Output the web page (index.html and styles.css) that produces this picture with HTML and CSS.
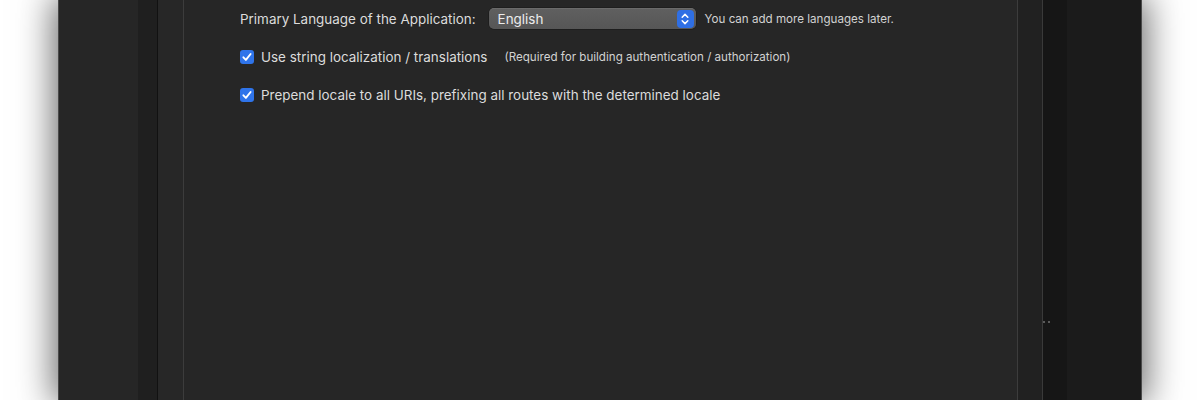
FILE: index.html
```html
<!DOCTYPE html>
<html>
<head>
<meta charset="utf-8">
<link rel="stylesheet" href="styles.css">
</head>
<body>
<div class="window">
  <div class="col col-a"></div>
  <div class="col col-b"></div>
  <div class="col col-c"></div>
  <div class="content">
    <div class="row">
      <span class="label">Primary Language of the Application:</span>
      <div class="select">
        <span class="select-text">English</span>
        <span class="stepper">
          <svg width="10" height="14" viewBox="0 0 10 14"><path d="M2.2 5.2 L5 2.4 L7.8 5.2" fill="none" stroke="#fff" stroke-width="1.5" stroke-linecap="round" stroke-linejoin="round"/><path d="M2.2 8.8 L5 11.6 L7.8 8.8" fill="none" stroke="#fff" stroke-width="1.5" stroke-linecap="round" stroke-linejoin="round"/></svg>
        </span>
      </div>
      <span class="hint">You can add more languages later.</span>
    </div>
    <div class="row">
      <span class="check"><svg width="14" height="14" viewBox="0 0 14 14"><path d="M3.4 7.3 L5.9 9.9 L10.6 4" fill="none" stroke="#fff" stroke-width="1.9" stroke-linecap="round" stroke-linejoin="round"/></svg></span>
      <span class="label">Use string localization / translations</span>
      <span class="hint hint-gap">(Required for building authentication / authorization)</span>
    </div>
    <div class="row">
      <span class="check"><svg width="14" height="14" viewBox="0 0 14 14"><path d="M3.4 7.3 L5.9 9.9 L10.6 4" fill="none" stroke="#fff" stroke-width="1.9" stroke-linecap="round" stroke-linejoin="round"/></svg></span>
      <span class="label">Prepend locale to all URIs, prefixing all routes with the determined locale</span>
    </div>
  </div>
  <div class="col col-d"><span class="dots"><i></i><i></i></span></div>
  <div class="col col-e"></div>
  <div class="col col-f"></div>
</div>
</body>
</html>
```
FILE: styles.css
```css
html, body {
  margin: 0;
  padding: 0;
  height: 100%;
  background: #ffffff;
  overflow: hidden;
}
body {
  font-family: Inter, "Liberation Sans", sans-serif;
}
.window {
  margin-left: 58px;
  width: 1084px;
  height: 400px;
  box-sizing: border-box;
  border-left: 1px solid #4a4a4a;
  border-right: 1px solid #4a4a4a;
  display: flex;
  box-shadow: 0 0 34px 4px rgba(0, 0, 0, 0.6);
  background: #262626;
}
.col { height: 100%; box-sizing: border-box; }
.col-a { width: 79px; background: #262626; }
.col-b { width: 20px; background: #1f1f1f; border-right: 1px solid #111111; }
.col-c { width: 26px; background: #272727; border-right: 1px solid #3c3c3c; }
.content {
  width: 834px;
  box-sizing: border-box;
  background: #262626;
  border-right: 1px solid #3c3c3c;
  padding: 8px 0 0 56px;
  display: flex;
  flex-direction: column;
  gap: 17px;
}
.col-d { width: 25px; background: #212121; border-right: 1px solid #3a3a3a; position: relative; }
.col-e { width: 24px; background: #161616; }
.col-f { flex: 1; background: #1b1b1b; }
.dots {
  position: absolute;
  left: 25px;
  top: 321px;
  display: flex;
  gap: 3px;
}
.dots i { width: 2px; height: 2px; background: #5a5a5a; display: block; }
.row {
  display: flex;
  align-items: center;
  height: 21px;
}
.label {
  color: #dcdcdc;
  font-size: 13.45px;
}
.hint {
  color: #d2d2d2;
  font-size: 11.6px;
  margin-left: 9px;
}
.hint-gap { margin-left: 17px; }
.select {
  margin-left: 13px;
  width: 207px;
  height: 21px;
  box-sizing: border-box;
  border-radius: 5px;
  background: linear-gradient(#606060, #565656);
  box-shadow: inset 0 0.5px 0 rgba(255,255,255,0.15), 0 0 0 0.5px rgba(0,0,0,0.4);
  display: flex;
  align-items: center;
  justify-content: space-between;
  padding: 0 2px 0 9px;
}
.select-text { color: #ececec; font-size: 13.45px; }
.stepper {
  width: 17px;
  height: 18px;
  border-radius: 4px;
  background: #2f6fe4;
  display: flex;
  align-items: center;
  justify-content: center;
}
.check {
  width: 14px;
  height: 14px;
  border-radius: 3px;
  background: #2f74ea;
  display: flex;
  align-items: center;
  justify-content: center;
  margin-right: 7px;
}
```
